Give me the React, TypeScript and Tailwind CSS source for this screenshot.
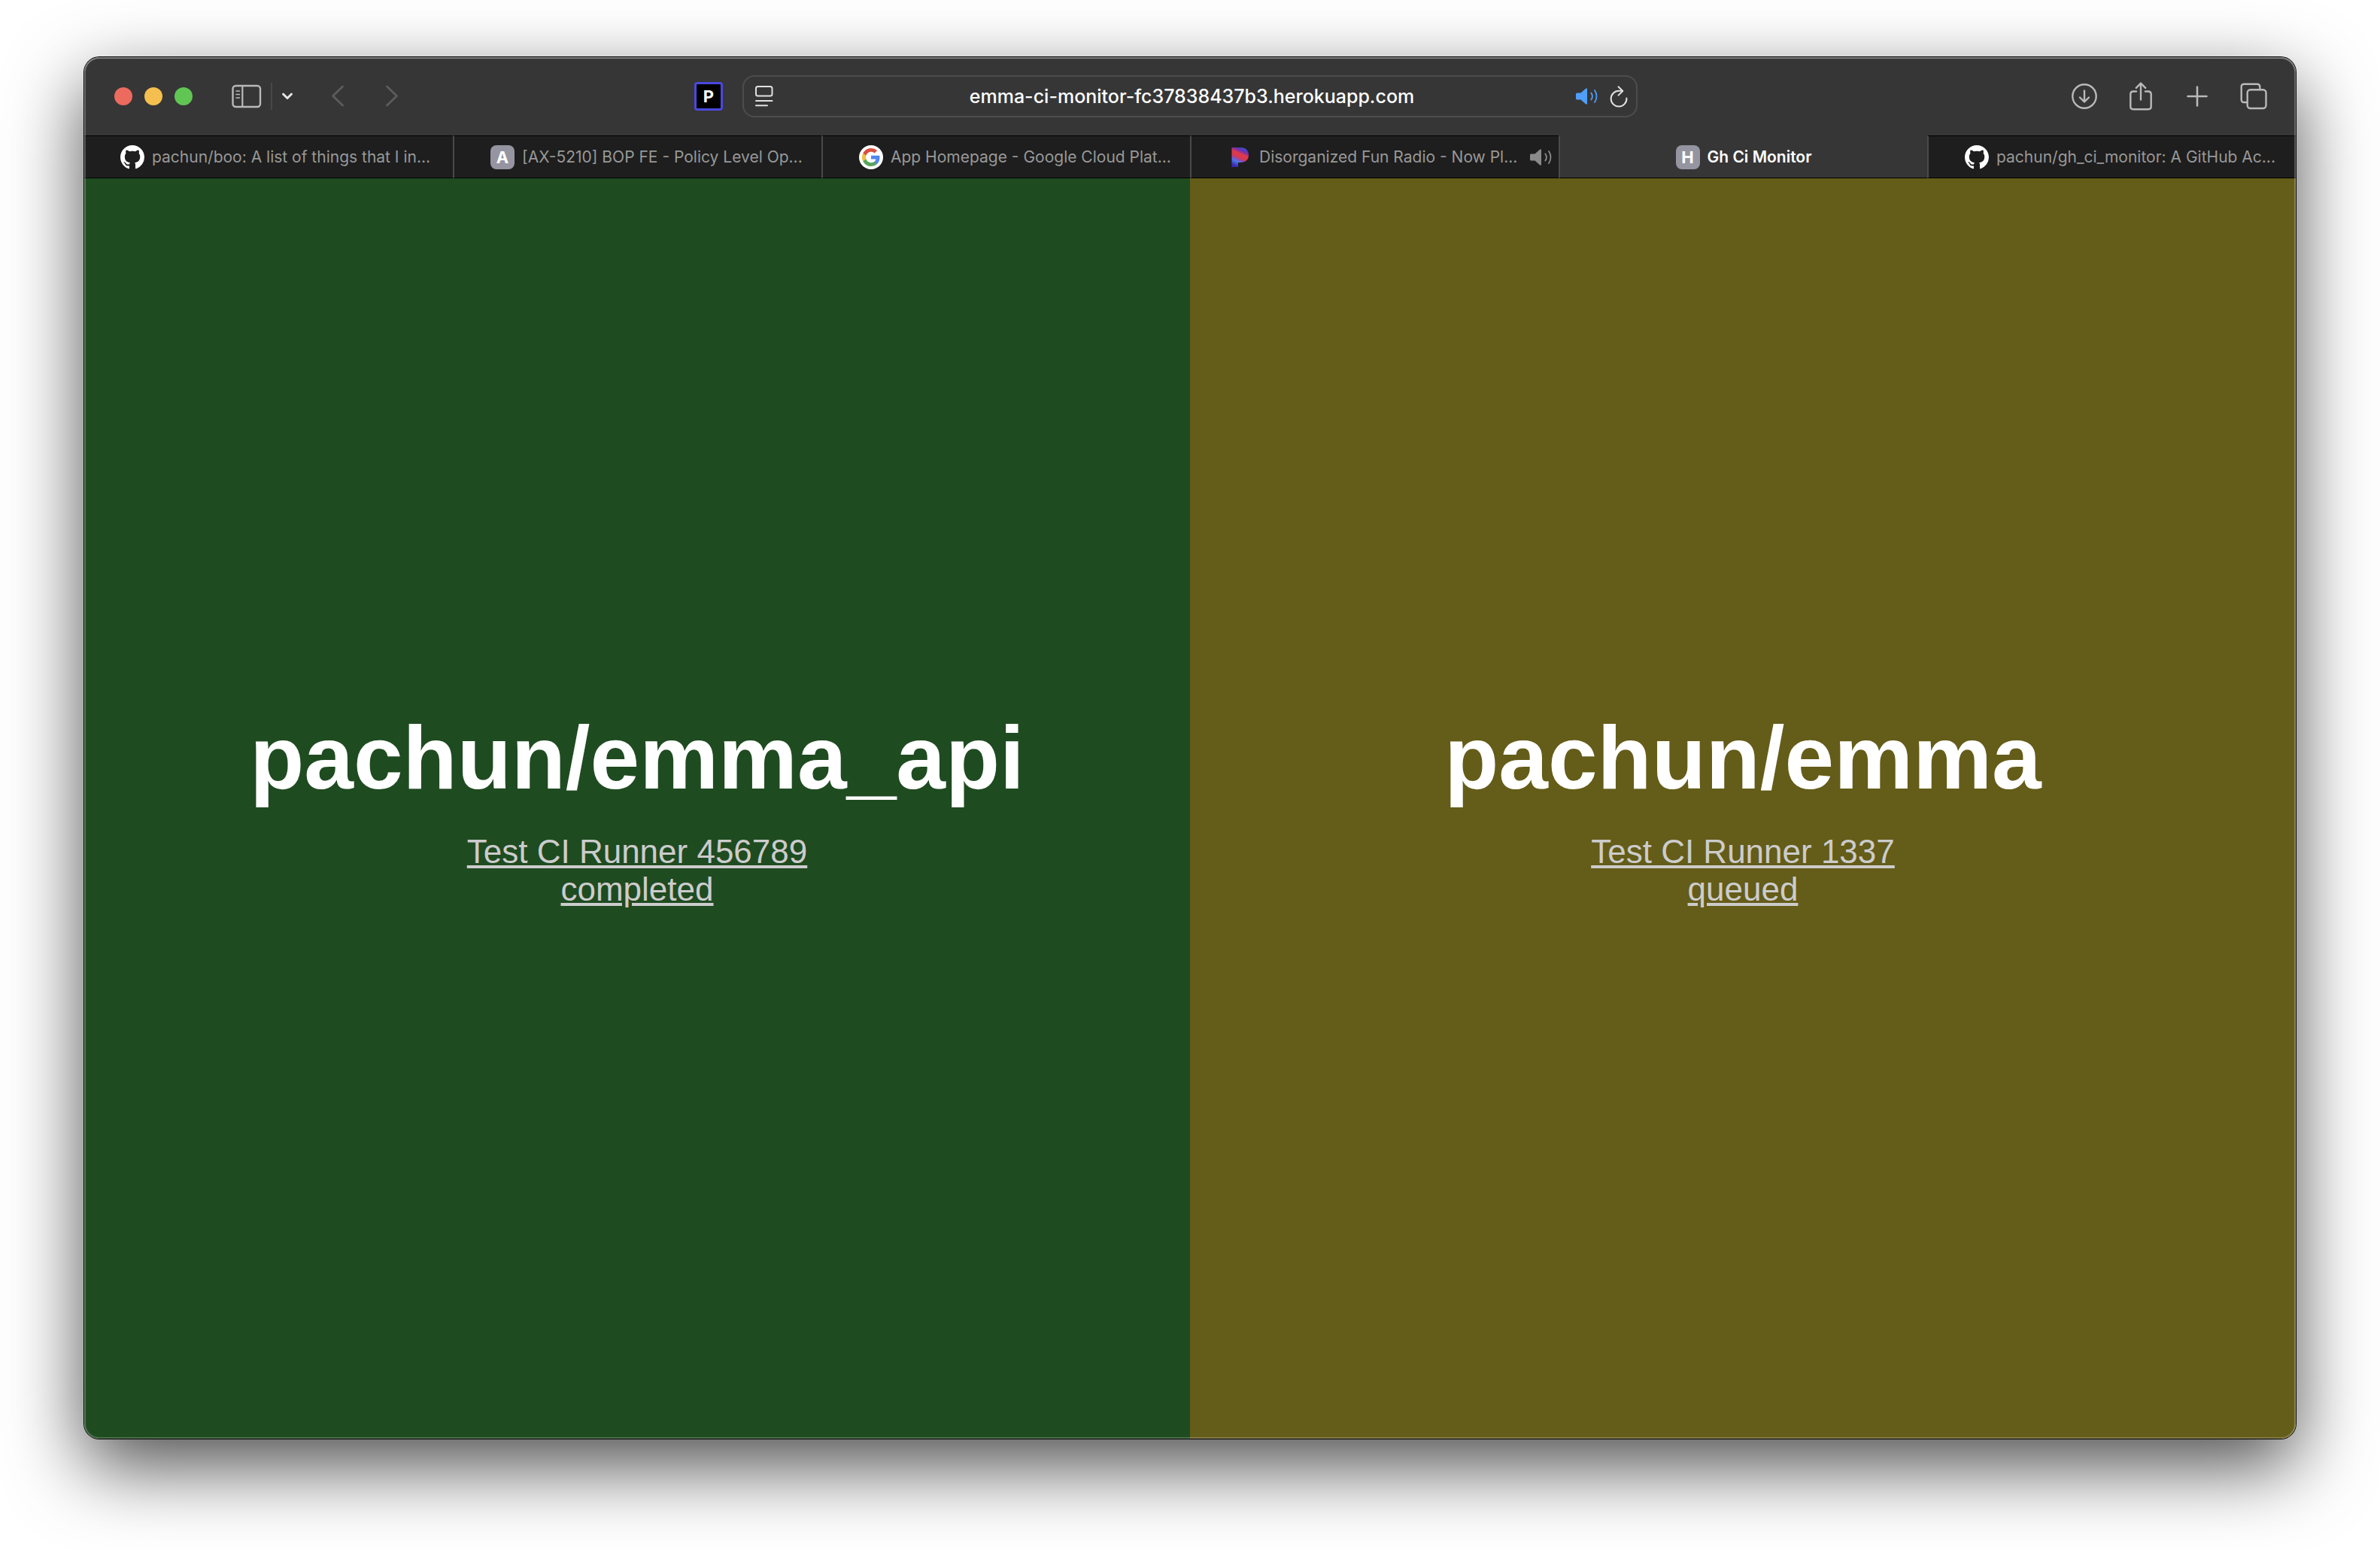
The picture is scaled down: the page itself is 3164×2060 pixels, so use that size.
import React from "react";

const SANS = "font-['Inter','Liberation_Sans',sans-serif]";

function SidebarIcon() {
  return (
    <svg width="40" height="32" viewBox="0 0 40 32" fill="none" stroke="#b9b9b9" aria-hidden="true">
      <rect x="1.5" y="2" width="36.5" height="28" rx="4" strokeWidth="2.4" />
      <path d="M14.3 2v28" strokeWidth="2.2" />
      <path d="M6 9h4.5M6 13.5h4.5M6 18h4.5" strokeWidth="1.6" strokeLinecap="round" />
    </svg>
  );
}

function ReaderIcon() {
  return (
    <svg width="24" height="28" viewBox="0 0 24 28" fill="none" stroke="#e0e0e0" strokeLinecap="round" aria-hidden="true">
      <rect x="1" y="1" width="21.5" height="12.5" rx="2.5" strokeWidth="2" />
      <path d="M1 20h21.5M1 26.3h15" strokeWidth="2" />
    </svg>
  );
}

function SpeakerIcon({ color }: { color: string }) {
  return (
    <svg width="32" height="24" viewBox="0 0 32 24" fill="none" stroke={color} aria-hidden="true">
      <path
        d="M1.500 7.500h5L13 1.800q2-1.300 2 .8v18.800q0 2.100-2 .8L6.500 16.500h-5q-1.500 0-1.500-1.500V9q0-1.500 1.500-1.500z"
        fill={color}
        stroke="none"
      />
      <path d="M20.300 7.400a8 8 0 0 1 0 9.200" strokeWidth="1.800" strokeLinecap="round" />
      <path d="M25 4a14 14 0 0 1 0 16" strokeWidth="1.800" strokeLinecap="round" />
    </svg>
  );
}

function ReloadIcon() {
  return (
    <svg width="26" height="30" viewBox="0 0 26 30" fill="none" stroke="#e0e0e0" strokeWidth="2" strokeLinecap="round" strokeLinejoin="round" aria-hidden="true">
      <path d="M18 7.800H13A10.400 10.400 0 1 0 23.400 17.500" />
      <path d="M12.500 2.200L18.300 8L12.500 13.600" />
    </svg>
  );
}

function DownloadIcon() {
  return (
    <svg width="36" height="36" viewBox="0 0 36 36" fill="none" stroke="#b9b9b9" strokeLinecap="round" strokeLinejoin="round" aria-hidden="true">
      <circle cx="18" cy="18" r="15.700" strokeWidth="2.400" />
      <path d="M18 10.500V25M12 19.500L18 25.300L24 19.500" strokeWidth="2.400" />
    </svg>
  );
}

function ShareIcon() {
  return (
    <svg width="32" height="40" viewBox="0 0 32 40" fill="none" stroke="#b9b9b9" strokeWidth="2.400" strokeLinecap="round" strokeLinejoin="round" aria-hidden="true">
      <path d="M10 13.500H6Q2.300 13.500 2.300 17.200V33.500Q2.300 37.200 6 37.200H26Q29.700 37.200 29.700 33.500V17.200Q29.700 13.500 26 13.500H22" />
      <path d="M16 24.500V3M9.800 8.800L16 2.600L22.200 8.800" />
    </svg>
  );
}

function PlusIcon() {
  return (
    <svg width="28" height="28" viewBox="0 0 28 28" stroke="#b9b9b9" strokeWidth="2.600" strokeLinecap="round" aria-hidden="true">
      <path d="M14 1.500v25M1.500 14h25" />
    </svg>
  );
}

function TabsIcon() {
  return (
    <svg width="36" height="36" viewBox="0 0 36 36" fill="none" stroke="#b9b9b9" strokeWidth="2.400" strokeLinecap="round" aria-hidden="true">
      <rect x="9.700" y="9.200" width="24.800" height="24.800" rx="4" />
      <path d="M9.500 26H5.500Q1.700 26 1.700 22.200V5.500Q1.700 1.700 5.500 1.700H22.500Q26.300 1.700 26.300 5.500V9" />
    </svg>
  );
}

function GitHubMark() {
  return (
    <svg width="32" height="32" viewBox="0 0 16 16" fill="#fff" className="shrink-0" aria-hidden="true">
      <path d="M8 0C3.58 0 0 3.58 0 8c0 3.54 2.29 6.53 5.47 7.59.4.07.55-.17.55-.38 0-.19-.01-.82-.01-1.49-2.01.37-2.53-.49-2.69-.94-.09-.23-.48-.94-.82-1.13-.28-.15-.68-.52-.01-.53.63-.01 1.08.58 1.23.82.72 1.21 1.87.87 2.33.66.07-.52.28-.87.51-1.07-1.78-.2-3.64-.89-3.64-3.95 0-.87.31-1.59.82-2.15-.08-.2-.36-1.02.08-2.12 0 0 .67-.21 2.2.82.64-.18 1.32-.27 2-.27.68 0 1.36.09 2 .27 1.53-1.04 2.2-.82 2.2-.82.44 1.1.16 1.92.08 2.12.51.56.82 1.27.82 2.15 0 3.07-1.87 3.75-3.65 3.95.29.25.54.73.54 1.48 0 1.07-.01 1.93-.01 2.2 0 .21.15.46.55.38A8.013 8.013 0 0016 8c0-4.42-3.58-8-8-8z" />
    </svg>
  );
}

function GoogleMark() {
  return (
    <svg width="32" height="32" viewBox="0 0 32 32" className="shrink-0" aria-hidden="true">
      <circle cx="16" cy="16" r="16" fill="#fff" />
      <g transform="translate(4 4)">
        <path fill="#4f86ec" d="M23.500 12.270c0-.85-.08-1.660-.22-2.450H12v4.640h6.450a5.520 5.520 0 0 1-2.390 3.620v3h3.870c2.260-2.090 3.570-5.170 3.570-8.810z" />
        <path fill="#58a55c" d="M12 24c3.240 0 5.950-1.080 7.930-2.910l-3.870-3c-1.080.72-2.450 1.160-4.060 1.160-3.130 0-5.780-2.110-6.730-4.960H1.290v3.090A11.990 11.990 0 0 0 12 24z" />
        <path fill="#f1bf42" d="M5.270 14.290a7.140 7.140 0 0 1 0-4.570V6.620H1.290a12 12 0 0 0 0 10.760l3.980-3.090z" />
        <path fill="#d85140" d="M12 4.750c1.770 0 3.350.61 4.600 1.800l3.420-3.420C17.950 1.190 15.240 0 12 0 7.310 0 3.260 2.700 1.290 6.620l3.980 3.090C6.220 6.860 8.870 4.750 12 4.750z" />
      </g>
    </svg>
  );
}

function PandoraMark() {
  return (
    <svg width="32" height="32" viewBox="0 0 32 32" className="shrink-0" aria-hidden="true">
      <defs>
        <linearGradient id="pandora" gradientUnits="userSpaceOnUse" x1="21" y1="0" x2="9" y2="27">
          <stop offset="0" stopColor="#4a7cf0" />
          <stop offset="0.180" stopColor="#4b3cc8" />
          <stop offset="0.300" stopColor="#8a2f9c" />
          <stop offset="0.400" stopColor="#dc3a50" />
          <stop offset="0.580" stopColor="#d8384e" />
          <stop offset="0.680" stopColor="#8d4ab8" />
          <stop offset="0.780" stopColor="#4a78e8" />
          <stop offset="1" stopColor="#3a28b4" />
        </linearGradient>
      </defs>
      <path fill="url(#pandora)" d="M5.500 3H17C24 3 28 7 28 13C28 19.500 23.500 23 17 23H14V28Q14 29 13 29H5.500z" />
    </svg>
  );
}

function LetterBadge({ letter }: { letter: string }) {
  return (
    <span className="flex size-8 shrink-0 items-center justify-center rounded-lg bg-[#9595a1] text-[22px] leading-none font-bold text-white">
      {letter}
    </span>
  );
}

type Tab = { title: string; icon: React.ReactNode; active?: boolean; audio?: boolean };

const tabs: Tab[] = [
  { title: "pachun/boo: A list of things that I in...", icon: <GitHubMark /> },
  { title: "[AX-5210] BOP FE - Policy Level Op...", icon: <LetterBadge letter="A" /> },
  { title: "App Homepage - Google Cloud Plat...", icon: <GoogleMark /> },
  { title: "Disorganized Fun Radio - Now Pl...", icon: <PandoraMark />, audio: true },
  { title: "Gh Ci Monitor", icon: <LetterBadge letter="H" />, active: true },
  { title: "pachun/gh_ci_monitor: A GitHub Ac...", icon: <GitHubMark /> },
];

function TabButton({ tab, first }: { tab: Tab; first: boolean }) {
  return (
    <button
      type="button"
      role="tab"
      aria-selected={!!tab.active}
      className={`flex min-w-0 items-center gap-2.5 border-t border-b border-b-black text-[21px] leading-7 whitespace-nowrap ${
        first ? "" : "border-l-2 border-l-[#4a4a4a]"
      } ${
        tab.active
          ? "justify-center border-t-[#363636] bg-[#363636] font-semibold text-white"
          : "border-t-black bg-[#1e1e1e] pr-1.5 pl-12 text-[#989898]"
      }`}
    >
      {tab.icon}
      <span>{tab.title}</span>
      {tab.audio && (
        <span className="ml-auto">
          <SpeakerIcon color="#8a8a8a" />
        </span>
      )}
    </button>
  );
}

function ToolButton({ label, children }: { label: string; children: React.ReactNode }) {
  return (
    <button type="button" aria-label={label} className="flex h-10 w-9 items-center justify-center">
      {children}
    </button>
  );
}

function Toolbar() {
  return (
    <header className="flex h-[104px] items-center bg-[#363636]">
      <div className="flex flex-1 items-center pl-10">
        <div className="flex gap-4">
          <button type="button" aria-label="Close" className="size-6 rounded-full bg-[#ed6a5e]" />
          <button type="button" aria-label="Minimize" className="size-6 rounded-full bg-[#f5bf4f]" />
          <button type="button" aria-label="Zoom" className="size-6 rounded-full bg-[#61c554]" />
        </div>
        <button type="button" aria-label="Show sidebar" className="ml-13">
          <SidebarIcon />
        </button>
        <span className="ml-3 h-9 w-0.5 bg-[#484848]" />
        <button type="button" aria-label="Tab groups" className="ml-3">
          <svg width="16" height="12" viewBox="0 0 16 12" fill="none" stroke="#e6e6e6" strokeWidth="3" strokeLinecap="round" strokeLinejoin="round" aria-hidden="true">
            <path d="M2.500 3L8 8.500L13.500 3" />
          </svg>
        </button>
        <button type="button" aria-label="Back" disabled className="ml-12">
          <svg width="20" height="30" viewBox="0 0 20 30" fill="none" stroke="#5c5c5c" strokeWidth="2.800" strokeLinecap="round" strokeLinejoin="round" aria-hidden="true">
            <path d="M17.500 2L4.500 14.500L17.500 27" />
          </svg>
        </button>
        <button type="button" aria-label="Forward" disabled className="ml-13">
          <svg width="20" height="30" viewBox="0 0 20 30" fill="none" stroke="#5c5c5c" strokeWidth="2.800" strokeLinecap="round" strokeLinejoin="round" aria-hidden="true">
            <path d="M4.500 2L17.500 14.500L4.500 27" />
          </svg>
        </button>
        <button
          type="button"
          className="mr-[26px] ml-auto flex size-[38px] items-center justify-center rounded border-3 border-[#4a48e0] bg-black text-[22px] leading-none font-bold text-white"
        >
          P
        </button>
      </div>

      <div className="flex h-14 w-[1190px] items-center rounded-2xl border-2 border-[#4d4d4d] pr-2.5 pl-[15px]">
        <button type="button" aria-label="Page menu" className="flex w-24 items-center">
          <ReaderIcon />
        </button>
        <input
          type="text"
          aria-label="Address"
          defaultValue="emma-ci-monitor-fc37838437b3.herokuapp.com"
          className="min-w-0 flex-1 bg-transparent text-center text-[25px] leading-8 font-medium text-white outline-none"
        />
        <div className="flex w-24 items-center justify-end gap-3">
          <button type="button" aria-label="Mute this tab">
            <SpeakerIcon color="#4f9ef8" />
          </button>
          <button type="button" aria-label="Reload">
            <ReloadIcon />
          </button>
        </div>
      </div>

      <div className="flex flex-1 items-center justify-end gap-[39px] pr-[38px] pl-0.5">
        <ToolButton label="Downloads">
          <DownloadIcon />
        </ToolButton>
        <ToolButton label="Share">
          <ShareIcon />
        </ToolButton>
        <ToolButton label="New tab">
          <PlusIcon />
        </ToolButton>
        <ToolButton label="Tab overview">
          <TabsIcon />
        </ToolButton>
      </div>
    </header>
  );
}

function RepoPanel({ repo, runner, status, tone }: { repo: string; runner: string; status: string; tone: string }) {
  return (
    <section className={`flex flex-1 basis-0 flex-col items-center justify-center pb-1 text-center ${tone}`}>
      <h1 className="mb-8 text-[118px] leading-[136px] font-bold text-white">{repo}</h1>
      <a href="#run" className="text-[44px] leading-[50px] text-[#ccc] underline">
        {runner}
        <br />
        {status}
      </a>
    </section>
  );
}

export default function App() {
  return (
    <div className="flex min-h-screen flex-col bg-white px-28 pt-[76px] pb-[148px]">
      <div className="relative flex flex-1 flex-col overflow-hidden rounded-[20px] shadow-[0_0_0_1px_#000,0_36px_100px_rgba(0,0,0,0.7)]">
        <div className={SANS}>
          <Toolbar />
          <div role="tablist" className="grid h-[57px] grid-cols-6">
            {tabs.map((tab, i) => (
              <TabButton key={tab.title} tab={tab} first={i === 0} />
            ))}
          </div>
        </div>
        <main className="flex flex-1 font-['Liberation_Sans',Arial,sans-serif]">
          <RepoPanel repo="pachun/emma_api" runner="Test CI Runner 456789" status="completed" tone="bg-[#1f4b21]" />
          <RepoPanel repo="pachun/emma" runner="Test CI Runner 1337" status="queued" tone="bg-[#645c19]" />
        </main>
        <div className="pointer-events-none absolute inset-0 rounded-[20px] shadow-[inset_0_1px_0_1px_rgba(255,255,255,0.2),inset_0_0_0_2px_rgba(255,255,255,0.2)]" />
      </div>
    </div>
  );
}
